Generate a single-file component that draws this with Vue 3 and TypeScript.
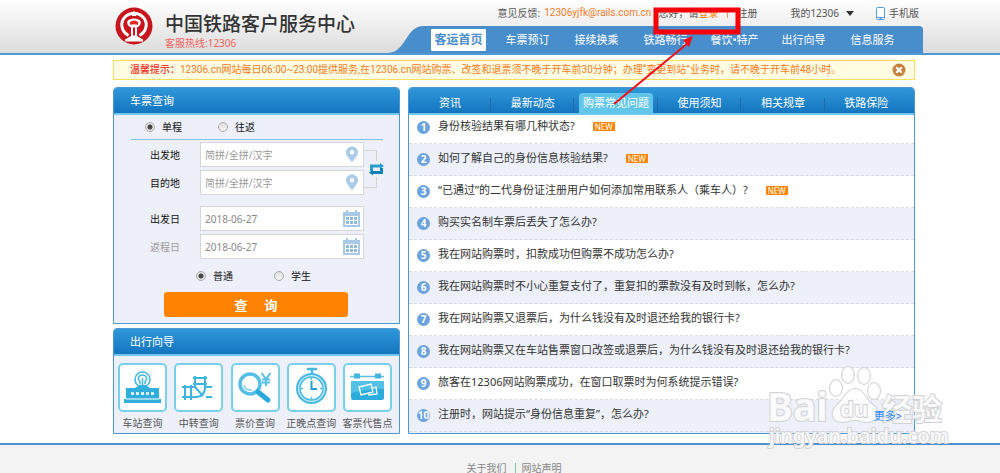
<script setup lang="ts">
import { ref } from 'vue'

interface Faq {
  text: string
  fresh?: boolean
}

const navItems: string[] = ['客运首页', '车票预订', '接续换乘', '铁路畅行', '餐饮•特产', '出行向导', '信息服务']
const tabs: string[] = ['资讯', '最新动态', '购票常见问题', '使用须知', '相关规章', '铁路保险']
const activeTab = ref<number>(2)

const faqs: Faq[] = [
  { text: '身份核验结果有哪几种状态?', fresh: true },
  { text: '如何了解自己的身份信息核验结果?', fresh: true },
  { text: '“已通过”的二代身份证注册用户如何添加常用联系人（乘车人）?', fresh: true },
  { text: '购买实名制车票后丢失了怎么办?' },
  { text: '我在网站购票时，扣款成功但购票不成功怎么办?' },
  { text: '我在网站购票时不小心重复支付了，重复扣的票款没有及时到帐，怎么办?' },
  { text: '我在网站购票又退票后，为什么钱没有及时退还给我的银行卡?' },
  { text: '我在网站购票又在车站售票窗口改签或退票后，为什么钱没有及时退还给我的银行卡?' },
  { text: '旅客在12306网站购票成功，在窗口取票时为何系统提示错误?' },
  { text: '注册时，网站提示“身份信息重复”，怎么办?' },
]

const trip = ref<string>('single')
const passenger = ref<string>('normal')
const fromStation = ref<string>('')
const toStation = ref<string>('')
const departDate = ref<string>('2018-06-27')
const returnDate = ref<string>('2018-06-27')
</script>

<template>
  <div class="page">
    <header class="header">
      <div class="brand">
        <svg class="logo" viewBox="0 0 38 38" aria-hidden="true">
          <circle cx="19" cy="19" r="18.5" fill="#c8141c" />
          <path d="M13.5 28.5C6 24.500 4.500 15 10.500 9.500C15.500 5 22.500 5 27.500 9.500C33.500 15 32 24.500 24.500 28.500" fill="none" stroke="#fff" stroke-width="3" />
          <path d="M12.500 14C14.500 10.500 23.500 10.500 25.500 14C26.500 17.500 24.500 19 22 20.500V29L28 32.500V34.500H10V32.500L16 29V20.500C13.500 19 11.500 17.500 12.500 14Z" fill="#fff" />
          <path d="M14.500 15.500Q19 11.500 23.500 15.500L22.500 18Q19 16.500 15.500 18Z" fill="#e8271e" />
          <path d="M18 20.500H20V28.500H18Z" fill="#c8141c" />
          <path d="M17 6L19 4L21 6V9H17Z" fill="#fff" />
        </svg>
        <div>
          <h1 class="brand-name">中国铁路客户服务中心</h1>
          <p class="hotline">客服热线:12306</p>
        </div>
      </div>
      <div class="header-right">
        <div class="top-links">
          <span>意见反馈:</span>
          <a class="mail" href="mailto:12306yjfk@rails.com.cn">12306yjfk@rails.com.cn</a>
          <span class="greet">您好，请<a class="login" href="#">登录</a></span>
          <i class="pipe"></i>
          <a class="register" href="#">注册</a>
          <button class="mine" type="button">我的12306 <i class="caret"></i></button>
          <a class="mobile" href="#">
            <svg viewBox="0 0 9 13" aria-hidden="true">
              <rect x="0.500" y="0.500" width="8" height="12" rx="1" fill="#fff" stroke="#5b9bd5" />
              <path d="M1 10.500H8M3.500 11.500H5.500" stroke="#5b9bd5" />
            </svg>
            手机版
          </a>
        </div>
        <div class="nav-wrap">
          <svg class="nav-curve" viewBox="0 0 36 27" preserveAspectRatio="none" aria-hidden="true">
            <path d="M0 27C19 26 17 0 36 0V27Z" fill="#488dcc" />
          </svg>
          <nav class="nav">
            <a v-for="(item, i) in navItems" :key="item" href="#" :class="{ current: i === 0 }"><span>{{ item }}</span></a>
          </nav>
        </div>
      </div>
    </header>

    <div class="notice">
      <p><strong>温馨提示：</strong>12306.cn网站每日06:00~23:00提供服务,在12306.cn网站购票、改签和退票须不晚于开车前30分钟；办理“变更到站”业务时，请不晚于开车前48小时。</p>
      <button type="button" aria-label="关闭">
        <svg viewBox="0 0 14 14"><circle cx="7" cy="7" r="6.500" fill="#c7803c" /><path d="M4.200 4.200L9.800 9.800M9.800 4.200L4.200 9.800" stroke="#fff" stroke-width="2.200" /></svg>
      </button>
    </div>

    <main class="main">
      <div class="left">
        <section class="panel search">
          <h2 class="panel-head">车票查询</h2>
          <form class="form" @submit.prevent>
            <div class="trip">
              <label><input v-model="trip" type="radio" value="single">单程</label>
              <label><input v-model="trip" type="radio" value="round">往返</label>
            </div>
            <div class="stations">
              <div class="fields">
                <div class="field">
                  <label for="from">出发地</label>
                  <div class="box">
                    <input id="from" v-model="fromStation" type="text" placeholder="简拼/全拼/汉字">
                    <svg class="pin" viewBox="0 0 12 17" aria-hidden="true"><path fill-rule="evenodd" d="M6 0.500C9.300 0.500 12 3 12 6.300C12 10 8 13 6 16.500C4 13 0 10 0 6.300C0 3 2.700 0.500 6 0.500ZM6 4A2.200 2.200 0 1 0 6 8.400A2.200 2.200 0 1 0 6 4Z" fill="#abcbea" /></svg>
                  </div>
                </div>
                <div class="field">
                  <label for="to">目的地</label>
                  <div class="box">
                    <input id="to" v-model="toStation" type="text" placeholder="简拼/全拼/汉字">
                    <svg class="pin" viewBox="0 0 12 17" aria-hidden="true"><path fill-rule="evenodd" d="M6 0.500C9.300 0.500 12 3 12 6.300C12 10 8 13 6 16.500C4 13 0 10 0 6.300C0 3 2.700 0.500 6 0.500ZM6 4A2.200 2.200 0 1 0 6 8.400A2.200 2.200 0 1 0 6 4Z" fill="#abcbea" /></svg>
                  </div>
                </div>
              </div>
              <button class="swap" type="button" aria-label="交换">
                <svg viewBox="0 0 20 38">
                  <path d="M0 0.500H12.500V11M0 37.500H12.500V27" fill="none" stroke="#d3d3d3" />
                  <path d="M6 14.500H16V13L20 16L16 19V17.500H9V21H6Z" fill="#2a9fd0" />
                  <path d="M19 24H9V25.500L5 22.500L9 19.500V21H16V18H19Z" fill="#1480b8" />
                </svg>
              </button>
            </div>
            <div class="fields dates">
              <div class="field">
                <label for="depart">出发日</label>
                <div class="box">
                  <input id="depart" v-model="departDate" type="text">
                  <svg class="cal" viewBox="0 0 17 17" aria-hidden="true"><path d="M0 2H3V0H5V2H12V0H14V2H17V17H0Z" fill="#a9c9e8" /><path d="M2 6H15V15H2Z" fill="#fff" /><path d="M3 7H6V10H3ZM7 7H10V10H7ZM11 7H14V10H11ZM3 11H6V14H3ZM7 11H10V14H7ZM11 11H14V14H11Z" fill="#8fbae2" /></svg>
                </div>
              </div>
              <div class="field off">
                <label for="return">返程日</label>
                <div class="box">
                  <input id="return" v-model="returnDate" type="text">
                  <svg class="cal" viewBox="0 0 17 17" aria-hidden="true"><path d="M0 2H3V0H5V2H12V0H14V2H17V17H0Z" fill="#a9c9e8" /><path d="M2 6H15V15H2Z" fill="#fff" /><path d="M3 7H6V10H3ZM7 7H10V10H7ZM11 7H14V10H11ZM3 11H6V14H3ZM7 11H10V14H7ZM11 11H14V14H11Z" fill="#8fbae2" /></svg>
                </div>
              </div>
            </div>
            <div class="kind">
              <label><input v-model="passenger" type="radio" value="normal">普通</label>
              <label><input v-model="passenger" type="radio" value="student">学生</label>
            </div>
            <button class="submit" type="submit"><span>查</span><span>询</span></button>
          </form>
        </section>

        <section class="panel guide">
          <h2 class="panel-head">出行向导</h2>
          <div class="tiles">
            <a href="#">
              <svg viewBox="0 0 45 45" aria-hidden="true">
                <circle cx="22.500" cy="14.500" r="7.500" fill="#fff" stroke="#46b9e3" stroke-width="1.600" />
                <path d="M20 19V16.500C17 14 18.500 10 22.500 10C26.500 10 28 14 25 16.500V19M22.500 13V20M19 20.500H26" fill="none" stroke="#46b9e3" stroke-width="1.500" />
                <path d="M6 23H15L18 21H27L30 23H39V34H41V38H4V34H6Z" fill="#30aedd" />
                <path d="M6 34H39" stroke="#fff" />
                <path d="M11 28.500H34" stroke="#fff" stroke-width="2.500" stroke-dasharray="3 2" />
              </svg>
              <span>车站查询</span>
            </a>
            <a href="#">
              <svg viewBox="0 0 45 45" aria-hidden="true">
                <g fill="none" stroke="#3eb4e0" stroke-width="2">
                  <path d="M6 22H19M6 32H19M9 20V35M15 20V35M28 22H36M30 32H36" />
                  <path d="M19 11V22M29 11V22C29 29 25 32 19 32M17 13H31M17 19H31M19 22L27 31" />
                </g>
              </svg>
              <span>中转查询</span>
            </a>
            <a href="#">
              <svg viewBox="0 0 45 45" aria-hidden="true">
                <circle cx="17" cy="19" r="10" fill="#fff" stroke="#55bfe5" stroke-width="3.500" />
                <path d="M11 20C12 24 15 25.500 19 25" fill="none" stroke="#9bd8ef" stroke-width="2" />
                <path d="M25 27L35 35" stroke="#2aa9db" stroke-width="5" stroke-linecap="round" />
                <path d="M28.500 8L33 14L37.500 8M33 14V21M29 14.500H37M29 17.500H37" fill="none" stroke="#55bfe5" stroke-width="2" />
              </svg>
              <span>票价查询</span>
            </a>
            <a href="#">
              <svg viewBox="0 0 45 45" aria-hidden="true">
                <path d="M18 4H28M23 4V8" stroke="#46b9e3" stroke-width="2.500" />
                <circle cx="22.500" cy="23.500" r="14.500" fill="#c6e9f6" stroke="#46b9e3" stroke-width="2" />
                <circle cx="22.500" cy="23.500" r="11.500" fill="#fff" stroke="#46b9e3" stroke-width="1.500" />
                <path d="M22.500 16V24H28" fill="none" stroke="#239fd2" stroke-width="2" />
                <path d="M22.500 13V15M22.500 32V34M12 23.500H14M31 23.500H33" stroke="#46b9e3" stroke-width="1.500" />
              </svg>
              <span>正晚点查询</span>
            </a>
            <a href="#">
              <svg viewBox="0 0 45 45" aria-hidden="true">
                <path d="M5 11.500H39" stroke="#58bfe3" stroke-width="1.500" />
                <path d="M9 8.500H15V13.500H9ZM30 8.500H36V13.500H30Z" fill="#44b5df" />
                <path d="M6 16H39V33Q39 35 37 35H8Q6 35 6 33Z" fill="#2cacdc" />
                <path d="M6 16H39V24Q22 24 6 28Z" fill="#55c0e6" />
                <path d="M14 22L26 19L28 27L16 30Z M28 23L31 22L32 29L24 30L23 28" fill="none" stroke="#fff" stroke-width="1.300" />
              </svg>
              <span>客票代售点</span>
            </a>
          </div>
        </section>
      </div>

      <section class="panel news">
        <div class="tabs panel-head" role="tablist">
          <button v-for="(t, i) in tabs" :key="t" type="button" role="tab" :aria-selected="i === activeTab" :class="{ active: i === activeTab }" @click="activeTab = i"><span>{{ t }}</span></button>
        </div>
        <ol class="faq">
          <li v-for="(f, i) in faqs" :key="i">
            <b class="num">{{ i + 1 }}</b>
            <a class="q" href="#">{{ f.text }}</a>
            <em v-if="f.fresh" class="new">NEW</em>
            <a v-if="i === faqs.length - 1" class="more" href="#">更多&gt;</a>
          </li>
        </ol>
      </section>
    </main>

    <footer class="footer">
      <a href="#">关于我们</a><i></i><a href="#">网站声明</a>
    </footer>

    <svg class="watermark" viewBox="0 0 184 88" aria-hidden="true">
      <g fill="#fff" fill-opacity="0.800" stroke="#d3d3d6" stroke-width="2" paint-order="stroke">
        <text x="1" y="57" font-size="39" font-weight="700">Bai</text>
        <ellipse cx="70" cy="24" rx="6" ry="8" />
        <ellipse cx="82" cy="11" rx="6" ry="8" />
        <ellipse cx="98" cy="12" rx="6" ry="8" />
        <ellipse cx="108" cy="27" rx="6" ry="8" />
        <path d="M89 25C98 25 100 36 107 41C115 47 111 58 101 58C94 58 95 56 89 56C83 56 82 58 76 58C65 58 64 47 71 41C78 36 80 25 89 25Z" />
        <text x="74" y="53" font-size="22" font-weight="700">du</text>
        <text x="116" y="56" font-size="30" font-weight="700">经验</text>
        <text x="3" y="79" font-size="20" font-weight="600">jingyan.baidu.com</text>
      </g>
    </svg>

    <svg class="callout" viewBox="0 0 132 100" aria-hidden="true">
      <rect x="46" y="3" width="82" height="22" fill="none" stroke="#f60007" stroke-width="5" />
      <path d="M4 97L78 36" stroke="#ee1018" stroke-width="2" />
      <path d="M83 29L79 40L73 33Z" fill="#ee1018" />
    </svg>
  </div>
</template>

<style>
body {
  margin: 0;
}
</style>

<style scoped>
* {
  box-sizing: border-box;
}
.page {
  position: relative;
  display: flex;
  flex-direction: column;
  min-height: 100vh;
  overflow: hidden;
  background: #fff;
  color: #333;
  font: 10px/16px "Noto Sans", "Noto Sans CJK SC", sans-serif;
}
a {
  color: inherit;
  text-decoration: none;
}
button {
  padding: 0;
  border: 0;
  background: none;
  color: inherit;
  font: inherit;
  cursor: pointer;
}
h1,
h2,
p,
ol {
  margin: 0;
  padding: 0;
}
.header {
  display: flex;
  justify-content: space-between;
  height: 55px;
  padding: 0 77px 0 115px;
  border-bottom: 2px solid #5296d2;
  background: linear-gradient(#fff, #dcdcdc);
}
.brand {
  display: flex;
  gap: 12px;
  padding-top: 7px;
}
.logo {
  width: 38px;
  height: 38px;
}
.brand-name {
  margin-top: 6px;
  font-size: 19px;
  line-height: 22px;
  font-weight: 500;
  white-space: nowrap;
}
.hotline {
  color: #f4625d;
}
.header-right {
  display: flex;
  flex-direction: column;
  justify-content: space-between;
}
.top-links {
  display: flex;
  align-items: center;
  justify-content: flex-end;
  height: 27px;
  padding-right: 4px;
  color: #555;
  white-space: nowrap;
}
.mail {
  margin: 0 7px 0 4px;
  color: #f47b28;
  font-family: Roboto, "Noto Sans", sans-serif;
}
.login {
  color: #ff7e00;
}
.pipe {
  width: 1px;
  height: 10px;
  margin: 0 9px;
  background: #e8a060;
}
.mine {
  display: flex;
  align-items: center;
  gap: 7px;
  margin: 0 22px 0 33px;
}
.caret {
  border: 4px solid transparent;
  border-top: 5px solid #333;
  border-bottom: 0;
}
.mobile {
  display: flex;
  align-items: center;
  gap: 4px;
}
.mobile svg {
  width: 9px;
  height: 13px;
}
.nav-wrap {
  display: flex;
  justify-content: flex-end;
  height: 27px;
}
.nav-curve {
  width: 36px;
  height: 27px;
}
.nav {
  display: flex;
  padding-right: 16px;
  border-radius: 0 4px 0 0;
  background: #488dcc;
  color: #fff;
  font-size: 11px;
}
.nav a {
  display: flex;
  align-items: center;
  justify-content: center;
  width: 69px;
}
.nav .current span {
  padding: 3px;
  border-radius: 1px;
  background: #fff;
  color: #488dcc;
  font-size: 12px;
  font-weight: 700;
}
.notice {
  display: flex;
  align-items: center;
  justify-content: space-between;
  height: 20px;
  margin: 5px 85px 0 113px;
  padding: 0 8px 0 16px;
  border: 1px solid #f7df5b;
  background: #fffde1;
  color: #f37b24;
  font-family: Roboto, "Noto Sans CJK SC", sans-serif;
  white-space: nowrap;
}
.notice strong {
  color: #f4332c;
  font-weight: 500;
}
.notice button,
.notice svg {
  display: block;
  width: 14px;
  height: 14px;
}
.main {
  display: grid;
  grid-template-columns: 287px 1fr;
  gap: 8px;
  margin: 7px 85px 0 113px;
}
.left {
  display: flex;
  flex-direction: column;
  gap: 4px;
}
.panel {
  border: 1px solid #4c98d3;
  border-radius: 4px 4px 0 0;
  background: #edf0f9;
}
.panel-head {
  height: 27px;
  border-bottom: 2px solid #73c8ef;
  border-radius: 3px 3px 0 0;
  background: linear-gradient(#3097d9, #1375bf);
  color: #fff;
  font-size: 11px;
  font-weight: 400;
}
h2.panel-head {
  padding-left: 16px;
  line-height: 25px;
}
.search {
  height: 237px;
}
.trip {
  display: flex;
  gap: 36px;
  height: 25px;
  margin: 0 16px 0 17px;
  padding-left: 14px;
  border-bottom: 1px solid #7fc4e6;
  color: #111;
}
.trip label,
.kind label {
  display: flex;
  align-items: center;
  gap: 7px;
}
input[type="radio"] {
  appearance: none;
  width: 10px;
  height: 10px;
  margin: 0;
  border: 1px solid #aaa;
  border-radius: 50%;
  background: linear-gradient(#ddd, #f5f5f5);
}
input[type="radio"]:checked {
  background: radial-gradient(circle, #444 0 2px, #e4e4e4 3px);
}
.stations {
  display: flex;
  padding-top: 2px;
}
.fields {
  display: flex;
  flex-direction: column;
  gap: 3px;
}
.dates {
  margin-top: 11px;
}
.field {
  display: flex;
  align-items: center;
  color: #111;
}
.field label {
  width: 86px;
  padding-left: 36px;
}
.off label {
  color: #999;
}
.box {
  display: flex;
  align-items: center;
  width: 164px;
  height: 25px;
  padding-right: 5px;
  border: 1px solid #d6d6d6;
  background: #fff;
}
.box input {
  flex: 1;
  min-width: 0;
  padding: 0 0 0 4px;
  border: 0;
  outline: 0;
  background: none;
  color: #888;
  font: inherit;
}
.box input::placeholder {
  color: #999;
}
.pin {
  width: 12px;
  height: 17px;
}
.box:has(.cal) {
  padding-right: 3px;
}
.cal {
  width: 17px;
  height: 17px;
}
.swap {
  align-self: center;
}
.swap svg {
  display: block;
  width: 20px;
  height: 38px;
}
.kind {
  display: flex;
  gap: 41px;
  height: 33px;
  padding-left: 82px;
  color: #111;
}
.submit {
  display: flex;
  align-items: center;
  justify-content: center;
  gap: 17px;
  width: 184px;
  height: 25px;
  margin-left: 50px;
  border-radius: 3px;
  background: #ff8300;
  color: #fff;
  font-size: 13px;
  font-weight: 700;
}
.guide {
  height: 106px;
}
.tiles {
  display: flex;
  justify-content: space-between;
  padding: 7px 6px 0 3px;
  color: #555;
}
.tiles a {
  display: flex;
  flex-direction: column;
  align-items: center;
  gap: 3px;
  width: 51px;
}
.tiles svg {
  width: 49px;
  height: 49px;
  border: 2px solid #78d0ed;
  border-radius: 5px;
  background: #fff;
}
.tiles span {
  white-space: nowrap;
}
.tabs {
  display: flex;
  padding-right: 6px;
}
.tabs button {
  display: flex;
  flex: 1;
  align-items: center;
  justify-content: center;
  padding-top: 5px;
  background: linear-gradient(#2668ae, #2668ae) right 10px / 1px 14px no-repeat;
}
.tabs button:first-child {
  flex: 0 0 82px;
}
.tabs button:last-child {
  background: none;
}
.tabs span {
  padding: 2px 4px 3px;
  border-radius: 4px 4px 0 0;
}
.tabs .active span {
  background: #61c6ea;
}
.faq {
  list-style: none;
  font-size: 11px;
}
.faq li {
  display: flex;
  align-items: center;
  height: 32px;
  padding: 0 12px 0 8px;
  border-bottom: 1px dashed #d9dade;
  white-space: nowrap;
}
.faq li:nth-child(odd) {
  background: #fff;
}
.faq li:first-child {
  height: 29px;
  padding-bottom: 3px;
}
.num {
  width: 13px;
  height: 13px;
  border-radius: 50%;
  background: #6aa3de;
  color: #fff;
  font-size: 10px;
  line-height: 13px;
  text-align: center;
}
.q {
  margin-left: 8px;
  padding-bottom: 3px;
}
.new {
  margin: 0 0 2px 18px;
  padding: 0 2px;
  border-radius: 1px;
  background: #ff8300;
  color: #fff;
  font-size: 8px;
  line-height: 9px;
  font-style: normal;
}
.more {
  position: relative;
  z-index: 1;
  margin-left: auto;
  color: #2f8cf5;
}
.footer {
  display: flex;
  flex: 1;
  justify-content: center;
  margin-top: 9px;
  padding: 16px 0 0 28px;
  border-top: 2px solid #4a90cf;
  background: #f3f3f3;
  color: #888;
  line-height: 14px;
}
.footer i {
  width: 1px;
  height: 11px;
  margin: 2px 6px 0 8px;
  background: #7fc5a8;
}
.watermark {
  position: absolute;
  top: 364px;
  right: 50px;
  width: 184px;
  height: 88px;
}
.callout {
  position: absolute;
  top: 7px;
  right: 258px;
  width: 132px;
  height: 100px;
}
</style>
